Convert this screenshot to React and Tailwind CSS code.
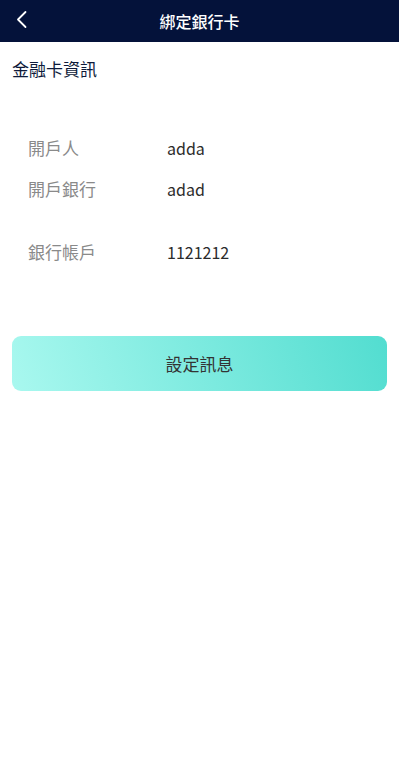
import React from 'react';

const rows = [
  { label: '開戶人', value: 'adda', cls: 'h-[41px]' },
  { label: '開戶銀行', value: 'adad', cls: 'h-[41px]' },
];

const Row = ({ label, value, cls }) => (
  <div className={`flex items-center ${cls}`}>
    <span className="w-[139px] text-[17px] text-[#8a8a8a]">{label}</span>
    <span className="text-[16px] text-[#2b2b2b]">{value}</span>
  </div>
);

export default function App() {
  return (
    <div
      className="w-[399px] min-h-[773px] bg-white"
      style={{ fontFamily: '"Noto Sans CJK TC", "Noto Sans", sans-serif' }}
    >
      {/* Header */}
      <div className="relative h-[42px] bg-[#04123a] flex items-center justify-center">
        <button className="absolute left-[14px] top-[10px] text-white">
          <svg width="16" height="20" viewBox="0 0 16 20" fill="none">
            <path d="M11.5 2 L4 9.5 L11.5 17" stroke="white" strokeWidth="1.8" strokeLinecap="round" strokeLinejoin="round" />
          </svg>
        </button>
        <h1 className="text-[16px] font-medium text-white">綁定銀行卡</h1>
      </div>

      <div className="px-[12px]">
        <div className="pt-[15px] text-[17px] text-[#0e1a3a] leading-[24px]">金融卡資訊</div>

        <div className="pl-[16px] pt-[46px]">
          {rows.map((r) => (
            <Row key={r.label} {...r} />
          ))}
          <div className="h-[22px]" />
          <Row label="銀行帳戶" value="1121212" cls="h-[41px]" />
        </div>

        <button className="mt-[64px] w-full h-[55px] rounded-[9px] bg-[linear-gradient(70deg,#a9f8ef,#52ddd0)] text-[17px] text-[#333]">
          設定訊息
        </button>
      </div>
    </div>
  );
}
